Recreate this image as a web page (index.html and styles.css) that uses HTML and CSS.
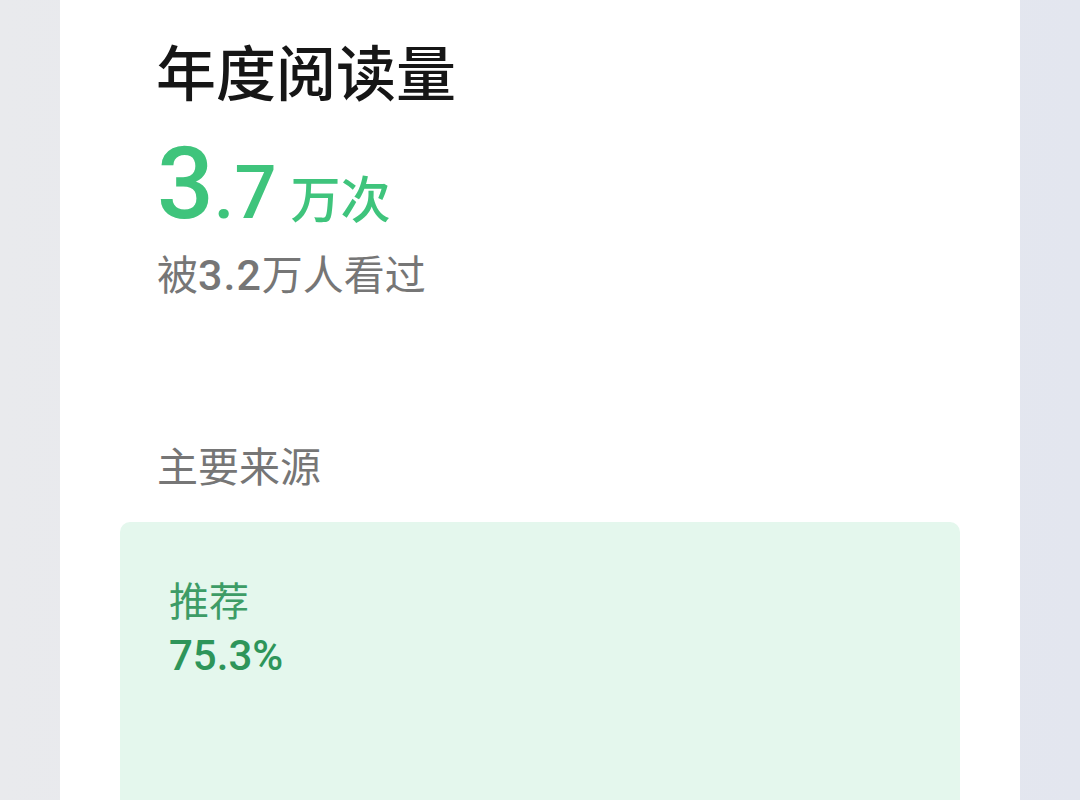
FILE: index.html
```html
<!DOCTYPE html>
<html lang="zh-CN">
<head>
<meta charset="utf-8">
<link rel="stylesheet" href="styles.css">
</head>
<body>
<div class="page">
  <div class="card">
    <h1 class="title">年度阅读量</h1>
    <div class="total">
      <span class="big">3</span><span class="mid">.7</span><span class="unit">万次</span>
    </div>
    <div class="viewers">被<span class="num">3.2</span>万人看过</div>
    <div class="section-label">主要来源</div>
    <div class="source">
      <div class="source-name">推荐</div>
      <div class="source-value">75.3%</div>
    </div>
  </div>
</div>
</body>
</html>
```

FILE: styles.css
```css
html, body {
  margin: 0;
  padding: 0;
  height: 100%;
  overflow: hidden;
}
body {
  font-family: Roboto, "Noto Sans CJK SC", sans-serif;
  background: linear-gradient(to right, #e9eaed 0%, #e6e8ee 50%, #e3e6ef 100%);
}
.page {
  display: flex;
  justify-content: center;
  height: 800px;
  overflow: hidden;
}
.card {
  width: 960px;
  background: #ffffff;
  padding: 35px 60px 0 60px;
  box-sizing: border-box;
  height: 800px;
  overflow: hidden;
}
.title {
  margin: 0 0 0 36px;
  font-family: "Noto Sans CJK SC", sans-serif;
  font-size: 60px;
  font-weight: 500;
  line-height: 70px;
  color: #161616;
}
.total {
  margin: 29px 0 0 37px;
  line-height: 100px;
  height: 100px;
  color: #3fc47c;
  font-weight: 500;
  display: flex;
  align-items: baseline;
}
.big {
  font-size: 100px;
}
.mid {
  font-size: 74px;
}
.unit {
  font-family: "Noto Sans CJK SC", sans-serif;
  font-size: 50px;
  font-weight: 500;
  margin-left: 14px;
}
.viewers {
  margin: 10px 0 0 37px;
  font-family: "Noto Sans CJK SC", sans-serif;
  font-size: 41px;
  line-height: 56px;
  color: #767676;
}
.num {
  font-family: Roboto, sans-serif;
  font-weight: 500;
  font-size: 43px;
  letter-spacing: 1px;
}
.section-label {
  margin: 133px 0 0 37px;
  font-family: "Noto Sans CJK SC", sans-serif;
  font-size: 41px;
  line-height: 56px;
  color: #767676;
}
.source {
  margin-top: 30px;
  background: #e4f7ed;
  border-radius: 10px 10px 0 0;
  padding: 49px 50px 0 49px;
  height: 300px;
}
.source-name {
  font-family: "Noto Sans CJK SC", sans-serif;
  font-size: 40px;
  line-height: 56px;
  color: #3d9c66;
}
.source-value {
  margin-top: 4px;
  font-size: 42px;
  font-weight: 500;
  line-height: 50px;
  color: #2e955a;
}
```
